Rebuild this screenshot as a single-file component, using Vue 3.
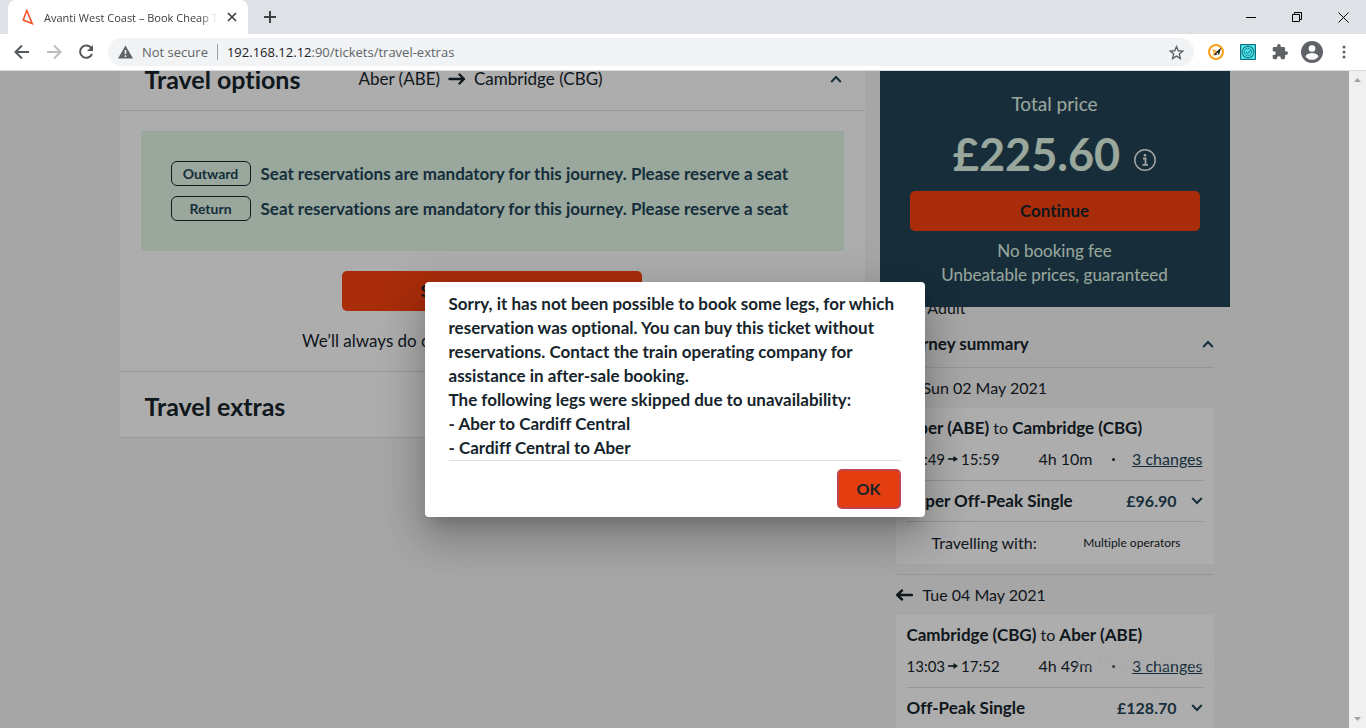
<script setup>
const seatRows = [
  { leg: 'Outward', text: 'Seat reservations are mandatory for this journey. Please reserve a seat' },
  { leg: 'Return', text: 'Seat reservations are mandatory for this journey. Please reserve a seat' },
]

const journeys = [
  {
    date: 'Sun 02 May 2021', back: false, from: 'Aber (ABE)', to: 'Cambridge (CBG)',
    depart: '04:49', arrive: '15:59', duration: '4h 10m', changes: '3 changes',
    ticket: 'Super Off-Peak Single', price: '£96.90', operators: 'Multiple operators',
  },
  {
    date: 'Tue 04 May 2021', back: true, from: 'Cambridge (CBG)', to: 'Aber (ABE)',
    depart: '13:03', arrive: '17:52', duration: '4h 49m', changes: '3 changes',
    ticket: 'Off-Peak Single', price: '£128.70', operators: 'Multiple operators',
  },
]

const messageLines = [
  'Sorry, it has not been possible to book some legs, for which reservation was optional. You can buy this ticket without reservations. Contact the train operating company for assistance in after-sale booking.',
  'The following legs were skipped due to unavailability:',
  '- Aber to Cardiff Central',
  '- Cardiff Central to Aber',
]
</script>

<template>
  <div class="browser">
    <header class="tabstrip">
      <div class="tab">
        <svg class="favicon" width="12" height="16" viewBox="0 0 12 16"><path d="M4.8 1.5 1.2 11l9 3.6z" fill="none" stroke="#f9532b" stroke-width="1.6" /></svg>
        <span class="tab-title">Avanti West Coast – Book Cheap Train Tickets</span>
        <button class="plain tab-close" aria-label="Close tab">
          <svg width="10" height="10" viewBox="0 0 10 10"><path d="M1 1l8 8M9 1 1 9" stroke="#3c4043" stroke-width="1.7" /></svg>
        </button>
      </div>
      <button class="plain new-tab" aria-label="New tab">
        <svg width="12" height="12" viewBox="0 0 12 12"><path d="M6 0v12M0 6h12" stroke="#3c4043" stroke-width="2" /></svg>
      </button>
      <div class="window-controls">
        <button class="plain" aria-label="Minimise"><svg width="10" height="10" viewBox="0 0 10 10"><path d="M0 5.5h10" stroke="#000" /></svg></button>
        <button class="plain" aria-label="Restore"><svg width="10" height="10" viewBox="0 0 10 10"><path d="M.5 2.500h7v7h-7zM2.500 2.500v-2h7v7h-2" fill="none" stroke="#000" /></svg></button>
        <button class="plain" aria-label="Close"><svg width="11" height="11" viewBox="0 0 11 11"><path d="M.5.5l10 10M10.500.5l-10 10" stroke="#000" /></svg></button>
      </div>
    </header>

    <nav class="toolbar">
      <div class="nav-buttons">
        <button class="plain" aria-label="Back"><svg width="16" height="16" viewBox="0 0 16 16"><path d="M15 8H2M8 1.500 1.500 8 8 14.500" fill="none" stroke="#54585d" stroke-width="2" /></svg></button>
        <button class="plain" aria-label="Forward"><svg width="16" height="16" viewBox="0 0 16 16"><path d="M1 8h13M8 1.500 14.500 8 8 14.500" fill="none" stroke="#bbbdbf" stroke-width="2" /></svg></button>
        <button class="plain" aria-label="Reload"><svg width="16" height="16" viewBox="0 0 16 16"><path d="M13.500 4.300A6.200 6.200 0 1 0 14 10" fill="none" stroke="#54585d" stroke-width="2" /><path d="M15 1v6H9z" fill="#54585d" /></svg></button>
      </div>
      <div class="address">
        <svg width="15" height="14" viewBox="0 0 15 14"><path d="M7.500.5 15 13.500H0z" fill="#5f6368" /><path d="M7.500 5v4M7.500 10.300v1.700" stroke="#f1f3f4" stroke-width="1.600" /></svg>
        <span class="not-secure">Not secure</span>
        <span class="divider"></span>
        <span class="url"><b>192.168.12.12</b>:90/tickets/travel-extras</span>
        <button class="plain star" aria-label="Bookmark"><svg width="15" height="15" viewBox="0 0 24 24"><path d="m12 2.500 2.800 6.700 7.200.6-5.500 4.700 1.700 7.100-6.200-3.800-6.200 3.800 1.700-7.100L2 9.800l7.200-.6z" fill="none" stroke="#5f6368" stroke-width="2.200" /></svg></button>
      </div>
      <div class="extensions">
        <button class="plain" aria-label="Compass extension"><svg width="16" height="16" viewBox="0 0 16 16"><circle cx="8" cy="8" r="7" fill="#fff" stroke="#fb9e18" stroke-width="2" /><path d="M4 5.500h3l2 1.500-2 4-2.500.5 1-3z" fill="#f9b44e" /><path d="M13 4 8.500 7.500 11 11zM6 11.500l2-3 1.500 2z" fill="#222" /><path d="m6.500 10.500 6-6" stroke="#222" /></svg></button>
        <button class="plain" aria-label="Badge extension"><svg width="16" height="16" viewBox="0 0 16 16"><path d="M.5.5h15v15H.5z" fill="#45dfe9" stroke="#176873" /><path d="m8 2 2.300.7 2.200 1.300 1.100 2.200.4 2-.6 2.300-1.400 2-2.100 1L8 14l-2.300-.6-2-1.300-1.200-2L2 8l.6-2.300 1.500-2 2-1.200z" fill="none" stroke="#176873" /><circle cx="8" cy="8" r="3.700" fill="none" stroke="#176873" stroke-dasharray="1.500 .6" /><path d="m6 8 1.500 1.500L10.500 6.500" fill="none" stroke="#176873" /></svg></button>
        <button class="plain" aria-label="Extensions"><svg width="16" height="16" viewBox="1 1 22 22"><path d="M20.500 11H19V7a2 2 0 0 0-2-2h-4V3.500a2.500 2.500 0 0 0-5 0V5H4a2 2 0 0 0-2 2v3.800h1.500a2.700 2.700 0 0 1 0 5.400H2V20c0 1.100.9 2 2 2h3.800v-1.500a2.700 2.700 0 0 1 5.400 0V22H17a2 2 0 0 0 2-2v-4h1.500a2.500 2.500 0 0 0 0-5z" fill="#5f6368" /></svg></button>
        <button class="plain" aria-label="Profile"><svg width="22" height="22" viewBox="0 0 22 22"><circle cx="11" cy="11" r="11" fill="#5f6368" /><circle cx="11" cy="7.500" r="3.300" fill="#fff" /><path d="M4.400 15.300c1.300-2 4.400-3.200 6.600-3.200s5.300 1.200 6.600 3.200a7.900 7.900 0 0 1-13.200 0z" fill="#fff" /></svg></button>
      </div>
      <button class="plain menu" aria-label="Menu"><svg width="4" height="14" viewBox="0 0 4 14"><path d="M2 2h.01M2 7h.01M2 12h.01" stroke="#5f6368" stroke-width="3" stroke-linecap="round" /></svg></button>
    </nav>

    <div class="viewport">
      <div class="canvas">
        <main class="page">
          <section class="options">
            <div class="section-head">
              <h2>Travel options</h2>
              <div class="route">
                <span>Aber (ABE)</span>
                <svg width="18" height="12" viewBox="0 0 18 12"><path d="M1.500 6h14M11.500 1.500 16 6l-4.500 4.500" fill="none" stroke="#16242b" stroke-width="2.400" stroke-linecap="round" stroke-linejoin="round" /></svg>
                <span>Cambridge (CBG)</span>
              </div>
              <button class="plain" aria-label="Collapse travel options"><svg width="12" height="8" viewBox="0 0 12 8"><path d="m1.200 7 4.800-5 4.800 5" fill="none" stroke="#234556" stroke-width="2" /></svg></button>
            </div>
            <div class="section-body">
              <div class="notice">
                <div v-for="row in seatRows" :key="row.leg" class="notice-row">
                  <span class="leg">{{ row.leg }}</span>
                  <span>{{ row.text }}</span>
                </div>
              </div>
              <button class="action seats">Select reservations</button>
              <p>We’ll always do our best to match your preferences</p>
            </div>
            <div class="section-head extras"><h2>Travel extras</h2></div>
          </section>

          <aside>
            <div class="total">
              <h3>Total price</h3>
              <div class="amount">
                <strong>£225.60</strong>
                <button class="plain" aria-label="Price information"><svg width="22" height="22" viewBox="0 0 22 22"><circle cx="11" cy="11" r="10.200" fill="none" stroke="#f1f3f2" stroke-width="1.500" /><path d="M9 9.500h2.500v6M8.500 15.800h5.500" fill="none" stroke="#f1f3f2" stroke-width="1.800" /><circle cx="11" cy="6.300" r="1.300" fill="#f1f3f2" /></svg></button>
              </div>
              <button class="action">Continue</button>
              <p>No booking fee<br>Unbeatable prices, guaranteed</p>
            </div>

            <div class="summary">
              <div class="passengers">1 Adult</div>
              <div class="summary-head">
                <h4>Journey summary</h4>
                <button class="plain" aria-label="Collapse journey summary"><svg width="12" height="8" viewBox="0 0 12 8"><path d="m1.200 7 4.800-5 4.800 5" fill="none" stroke="#234556" stroke-width="2" /></svg></button>
              </div>
              <div v-for="j in journeys" :key="j.date" class="journey">
                <div class="date">
                  <svg :class="{ forward: !j.back }" width="17" height="12" viewBox="0 0 17 12"><path d="M16 6H2M6 1.500 1.200 6 6 10.500" fill="none" stroke="#16242b" stroke-width="2.400" stroke-linecap="round" stroke-linejoin="round" /></svg>
                  <span>{{ j.date }}</span>
                </div>
                <div class="card">
                  <div class="stations"><b>{{ j.from }}</b> to <b>{{ j.to }}</b></div>
                  <div class="times">
                    <span class="clock">{{ j.depart }}
                      <svg width="10" height="8" viewBox="0 0 10 8"><path d="M0 4h8" stroke="#16242b" stroke-width="1.600" /><path d="M5.500 1 10 4 5.500 7z" fill="#16242b" /></svg>
                      {{ j.arrive }}</span>
                    <span class="duration">{{ j.duration }}</span>
                    <span class="dot"></span>
                    <a href="#">{{ j.changes }}</a>
                  </div>
                  <div class="fare">
                    <b>{{ j.ticket }}</b>
                    <b class="price">{{ j.price }}</b>
                    <button class="plain" aria-label="Show fare details"><svg width="12" height="8" viewBox="0 0 12 8"><path d="m1.200 1 4.800 5 4.800-5" fill="none" stroke="#234556" stroke-width="2" /></svg></button>
                  </div>
                  <div class="operators">
                    <span>Travelling with:</span>
                    <small>{{ j.operators }}</small>
                  </div>
                </div>
              </div>
            </div>
          </aside>
        </main>

        <div class="backdrop">
          <div class="dialog" role="dialog" aria-modal="true">
            <div class="message">
              <div v-for="line in messageLines" :key="line">{{ line }}</div>
            </div>
            <div class="dialog-actions"><button class="ok">OK</button></div>
          </div>
        </div>
        <div class="watermark"><div class="mark-title">Activate Windows</div><div>Go to Settings to activate</div></div>
      </div>
      <div class="scrollbar">
        <svg width="7" height="4" viewBox="0 0 7 4"><path d="M3.500 0 7 4H0z" fill="#a3a3a3" /></svg>
        <svg width="7" height="4" viewBox="0 0 7 4"><path d="M0 0h7L3.500 4z" fill="#a3a3a3" /></svg>
      </div>
    </div>
  </div>
</template>

<style>
body { margin: 0; overflow: hidden; }
</style>

<style scoped>
* { box-sizing: border-box; }
h2, h3, h4, p { margin: 0; }
button { font: inherit; }
.plain { display: flex; align-items: center; justify-content: center; padding: 0; border: 0; background: none; }
svg { display: block; flex: none; }
.browser { display: flex; flex-direction: column; height: 100vh; font-family: "Open Sans", sans-serif; }

.tabstrip { display: flex; align-items: center; height: 34px; background: #dee1e6; padding-left: 8px; flex: none; }
.tab { display: flex; align-items: center; width: 240px; height: 34px; padding: 0 11px 0 14px; background: #fff; border-radius: 8px 8px 0 0; }
.tab-title { flex: 1; margin-left: 10px; margin-right: 10px; font-size: 11px; color: #3c4043; white-space: nowrap; overflow: hidden; mask-image: linear-gradient(90deg, #000 90%, transparent); }
.new-tab { margin-left: 16px; }
.window-controls { display: flex; margin-left: auto; height: 28px; }
.window-controls button { width: 46px; }

.toolbar { display: flex; align-items: center; height: 36px; flex: none; padding-right: 20px; background: #fff; }
.nav-buttons { display: flex; gap: 16px; padding: 0 14px; }
.address { display: flex; flex: 1; align-items: center; height: 28px; padding: 0 10px; border-radius: 14px; background: #f1f3f4; font-size: 13px; color: #5f6368; }
.not-secure { margin-left: 9px; }
.divider { width: 1px; height: 16px; margin: 0 9px; background: #9aa0a6; }
.url b { font-weight: 400; color: #202124; }
.star { margin-left: auto; }
.extensions { display: flex; align-items: center; gap: 16px; margin-left: 14px; }
.extensions button:last-child { margin-left: -3px; }
.menu { margin-left: 19px; }

.viewport { display: flex; flex: 1; min-height: 0; border-top: 1px solid #dadce0; font-family: Lato, sans-serif; font-size: 16px; line-height: 24px; font-variant-ligatures: none; color: #16242b; }
.canvas { position: relative; flex: 1; min-width: 0; overflow: hidden; background: #f5f5f5; }
.scrollbar { display: flex; flex-direction: column; justify-content: space-between; align-items: center; width: 17px; padding: 7px 0; background: #f0f0f0; }

.page { display: grid; grid-template-columns: minmax(0, 1fr) 350px; gap: 15px; align-items: start; max-width: 1110px; margin: 0 auto; }
.options { margin-top: -24px; background: #fff; border-bottom: 1px solid #e0e0e0; font-size: 17px; }
.section-head { display: flex; align-items: center; height: 64px; padding: 0 23px 0 25px; border-bottom: 1px solid #dedede; }
.section-head h2 { font-size: 25px; line-height: 32px; font-weight: 700; }
.route { display: flex; flex: 1; align-items: center; gap: 8px; margin-left: 58px; }
.section-body { display: flex; flex-direction: column; align-items: center; padding: 20px 21px 18px; border-bottom: 1px solid #dedede; }
.notice { display: flex; flex-direction: column; gap: 10px; align-self: stretch; padding: 30px; background: #e2f7e8; color: #234556; font-weight: 700; }
.notice-row { display: flex; align-items: center; gap: 10px; height: 25px; }
.leg { width: 80px; height: 25px; border: 1px solid #16242b; border-radius: 6px; font-size: 14px; line-height: 24px; text-align: center; }
.action { height: 40px; border: 0; border-radius: 5px; background: #fa4311; color: #16242b; font-size: 17px; font-weight: 700; }
.seats { width: 300px; margin: 20px 0 18px; }
.extras { height: 65px; border-bottom: 0; }
.extras h2 { padding-top: 2px; }

.total { position: relative; display: flex; flex-direction: column; align-items: center; padding: 21px 30px 20px; background: #234556; color: #e2f7e8; text-align: center; }
.total h3 { font-size: 19px; font-weight: 400; }
.amount { display: flex; align-items: center; gap: 14px; height: 75px; }
.amount strong { font-size: 45px; line-height: 56px; }
.amount button { margin-top: 12px; }
.total .action { align-self: stretch; }
.total p { margin-top: 8px; font-size: 17px; }

.summary { margin-top: -11px; padding: 0 16px; }
.passengers { padding-left: 19px; }
.summary-head { display: flex; justify-content: space-between; align-items: center; height: 48px; border-bottom: 1px solid #dedede; }
.summary-head h4, .card b { font-size: 17px; }
.journey + .journey { margin-top: 10px; border-top: 1px solid #dedede; }
.date { display: flex; align-items: center; gap: 10px; height: 40px; }
.forward { transform: rotate(180deg); }
.card { padding: 8px 11px 9px; background: #fff; }
.times { display: flex; align-items: center; height: 40px; padding-bottom: 2px; }
.clock { display: flex; align-items: center; gap: 3px; width: 132px; font-size: 15px; }
.duration { width: 73px; }
.dot { width: 3px; height: 3px; border-radius: 50%; background: #16242b; }
.times a { margin-left: auto; color: #234556; }
.fare { display: flex; align-items: center; height: 42px; border: solid #dedede; border-width: 1px 0; }
.card .price { margin-left: auto; margin-right: 14px; font-size: 16px; color: #234556; }
.operators { display: flex; justify-content: space-between; align-items: center; padding: 9px 22px 0 25px; }
.operators small { font-size: 12px; line-height: 20px; }

.backdrop { position: absolute; inset: 0; display: flex; align-items: center; justify-content: center; background: rgba(0, 0, 0, .32); }
.dialog { width: 500px; padding: 10px 24px 8px; border-radius: 4px; background: #fff; box-shadow: 0 11px 15px -7px rgba(0, 0, 0, .2), 0 24px 38px 3px rgba(0, 0, 0, .14), 0 9px 46px 8px rgba(0, 0, 0, .12); }
.message { font-size: 17px; font-weight: 700; border-bottom: 1px solid #e0e0e0; }
.dialog-actions { display: flex; justify-content: flex-end; padding-top: 8px; }
.ok { width: 64px; height: 40px; border: 2px solid #bf4650; border-radius: 5px; background: #e33d10; color: #16242b; font-weight: 700; }
.watermark { position: absolute; right: 110px; bottom: 32px; font: 14px/20px "Open Sans", sans-serif; color: rgba(166, 166, 166, .4); white-space: nowrap; pointer-events: none; }
.mark-title { font-size: 20px; line-height: 26px; }
</style>
